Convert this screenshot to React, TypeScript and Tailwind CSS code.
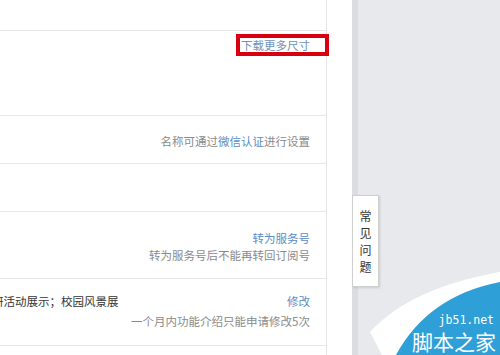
import React from 'react';

const font = { fontFamily: '"Noto Sans CJK SC", "Microsoft YaHei", sans-serif' };

const Watermark: React.FC = () => (
  <div className="absolute right-0 bottom-0 w-[130px] h-[85px] pointer-events-none">
    <svg width="130" height="85" viewBox="0 0 130 85" className="absolute inset-0">
      <path d="M0 62 Q40 18 130 2 L130 12 Q58 26 26 85 L12 85 Z" fill="#ffffff" />
      <path d="M26 85 Q58 26 130 12 L130 85 Z" fill="#2f9fd8" />
    </svg>
    <div className="absolute right-[6px] top-[45px] text-white text-[11.5px] leading-none font-['DejaVu_Sans_Mono',monospace]">
      jb51.net
    </div>
    <div className="absolute right-[4px] top-[59px] text-white text-[21px] leading-[24px]" style={font}>
      脚本之家
    </div>
  </div>
);

export default function App() {
  return (
    <div className="relative w-[500px] h-[355px] overflow-hidden flex bg-white text-[11.5px]" style={font}>
      <div className="w-[352px] bg-white shrink-0">
        <div className="w-[327px] h-full border-r border-[#e6e6e6] flex flex-col">
          <div className="h-[31px] border-b border-[#e8e8e8] shrink-0" />

          <div className="h-[85px] border-b border-[#e8e8e8] shrink-0 flex justify-end pr-[16px] pt-[6px]">
            <div className="relative h-[16px] leading-[16px]">
              <div className="absolute -left-[5px] -right-[19px] -top-[3px] -bottom-[3px] border-4 border-[#d8000e]" />
              <a className="text-[#6d93b6]">下载更多尺寸</a>
            </div>
          </div>

          <div className="h-[48px] border-b border-[#e8e8e8] shrink-0 flex justify-end pr-[16px] pt-[17px]">
            <div className="leading-[16px] text-[#8a8a8a]">
              名称可通过<a className="text-[#5b8dc4]">微信认证</a>进行设置
            </div>
          </div>

          <div className="h-[48px] border-b border-[#e8e8e8] shrink-0" />

          <div className="h-[67px] border-b border-[#e8e8e8] shrink-0 flex flex-col items-end pr-[16px] pt-[18px] leading-[17px]">
            <a className="text-[#5b8dc4]">转为服务号</a>
            <span className="text-[#8a8a8a]">转为服务号后不能再转回订阅号</span>
          </div>

          <div className="h-[67px] border-b border-[#e8e8e8] shrink-0 flex justify-between pr-[16px] pt-[14px] leading-[17px]">
            <span className="text-[#333333] -ml-[8px] whitespace-nowrap">研活动展示；校园风景展</span>
            <div className="flex flex-col items-end gap-[3px]">
              <a className="text-[#5b8dc4]">修改</a>
              <span className="text-[#8a8a8a]">一个月内功能介绍只能申请修改5次</span>
            </div>
          </div>

          <div className="flex-1" />
        </div>
      </div>

      <div className="flex-1 bg-[#e8e9ed] border-l-[6px] border-[#dcdde1]" />

      <div className="absolute left-[352px] top-[195px] w-[27px] h-[92px] bg-white border border-[#cfcfcf] shadow-[1px_1px_2px_rgba(0,0,0,0.12)] flex flex-col items-center pt-[11px] text-[12px] leading-[17px] text-[#333333]">
        <span>常</span>
        <span>见</span>
        <span>问</span>
        <span>题</span>
      </div>

      <Watermark />
    </div>
  );
}
